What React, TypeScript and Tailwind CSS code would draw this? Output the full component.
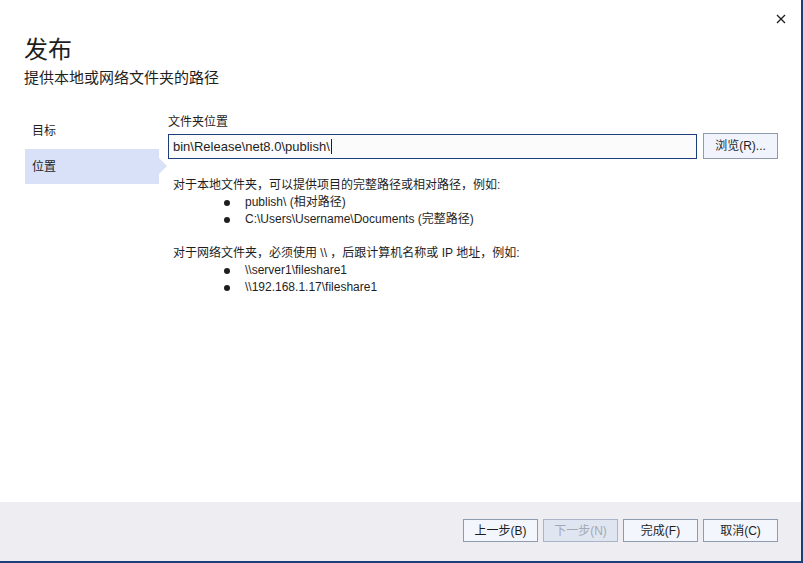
import React from 'react';

const font = { fontFamily: '"Liberation Sans", "Noto Sans CJK SC", sans-serif' };

const Bullet = ({ children }: { children: React.ReactNode }) => (
  <div className="flex items-center h-[17px]">
    <span className="w-[57px] shrink-0 pl-[51px] flex items-center">
      <span className="block shrink-0 w-[6px] h-[6px] rounded-full bg-[#1e1e1e]" />
    </span>
    <span className="ml-[15px]">{children}</span>
  </div>
);

const FooterButton = ({ label, disabled }: { label: string; disabled?: boolean }) => (
  <button
    className={`w-[75px] h-[23px] border text-[12px] leading-none ${
      disabled ? 'border-[#a9b4c6] bg-[#dfe6f1] text-[#a4a9b2]' : 'border-[#8e9aae] bg-[#f3f6fd] text-[#1e1e1e]'
    }`}
  >
    {label}
  </button>
);

export default function App() {
  return (
    <div className="relative w-[803px] h-[563px] bg-white text-[#1e1e1e] overflow-hidden flex flex-col border-r-[2px] border-b-[2px] border-[#1c3f7c]" style={font}>
      {/* close */}
      <button className="absolute right-[13px] top-[12px] w-[14px] h-[14px] flex items-center justify-center">
        <svg width="10" height="10" viewBox="0 0 10 10">
          <path d="M1 1 L9 9 M9 1 L1 9" stroke="#1e1e1e" strokeWidth="1.3" />
        </svg>
      </button>

      <div className="pl-[24px] pt-[35px]">
        <h1 className="text-[24px] leading-[30px]">发布</h1>
        <p className="text-[15px] leading-[20px] mt-[3px] text-[#1e1e1e]">提供本地或网络文件夹的路径</p>
      </div>

      <div className="flex flex-1 mt-[23px]">
        {/* nav */}
        <div className="w-[168px] shrink-0 pl-[25px] pt-[2px] flex flex-col text-[12px]">
          <div className="h-[35px] flex items-center pl-[7px]">目标</div>
          <div className="relative h-[35px] flex items-center pl-[7px] bg-[#d8e1f8] mt-[1px] w-[134px]">
            位置
            <span className="absolute right-[-8px] top-[9px] w-0 h-0 border-y-[8px] border-y-transparent border-l-[8px] border-l-[#d8e1f8]" />
          </div>
        </div>

        {/* content */}
        <div className="flex-1 text-[12px]">
          <div className="leading-[16px] mt-[3px]">文件夹位置</div>
          <div className="flex items-center mt-[4px]">
            <div className="w-[529px] h-[25px] border border-[#1c3f7c] bg-[#fbfbfb] flex items-center pl-[4px] text-[13px]">
              bin\Release\net8.0\publish\<span className="inline-block w-px h-[15px] bg-[#1e1e1e] ml-px" />
            </div>
            <button className="ml-[6px] w-[75px] h-[26px] border border-[#8e9aae] bg-[#f1f4fc] text-[12px] -mt-[2px]">浏览(R)...</button>
          </div>

          <div className="pl-[5px] mt-[18px] leading-[17px]">
            <div>对于本地文件夹，可以提供项目的完整路径或相对路径，例如:</div>
            <Bullet>publish\ (相对路径)</Bullet>
            <Bullet>C:\Users\Username\Documents (完整路径)</Bullet>
            <div className="mt-[17px]">对于网络文件夹，必须使用 \\ ，后跟计算机名称或 IP 地址，例如:</div>
            <Bullet>\\server1\fileshare1</Bullet>
            <Bullet>\\192.168.1.17\fileshare1</Bullet>
          </div>
        </div>
      </div>

      {/* footer */}
      <div className="h-[59px] bg-[#eeeef2] flex items-start justify-end gap-[5px] pr-[23px] pt-[17px]">
        <FooterButton label="上一步(B)" />
        <FooterButton label="下一步(N)" disabled />
        <FooterButton label="完成(F)" />
        <FooterButton label="取消(C)" />
      </div>
    </div>
  );
}
